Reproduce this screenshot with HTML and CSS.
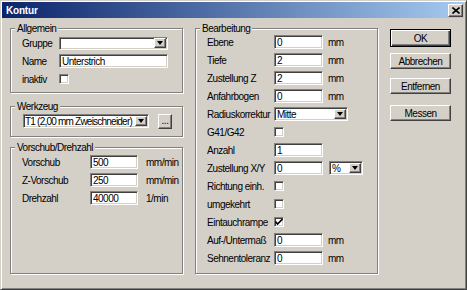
FILE: index.html
```html
<!DOCTYPE html>
<html lang="de">
<head>
  <meta charset="UTF-8">
  <title>Kontur</title>
  <link rel="stylesheet" href="styles.css">
</head>
<body>
  <div class="dialog">
    <div class="titlebar">
      <span class="title">Kontur</span>
      <span class="close">
        <svg width="8" height="7" viewBox="0 0 8 7"><path d="M0.5 0.5l7 6M7.5 0.5l-7 6" stroke="#000" stroke-width="1.6"/></svg>
      </span>
    </div>

    <div class="content">
      <div class="col-left">
        <fieldset class="group allgemein">
          <legend>Allgemein</legend>
          <div class="row">
            <span class="lbl">Gruppe</span>
            <div class="combo w-gruppe"><span class="combo-text"></span><span class="drop"></span></div>
          </div>
          <div class="row">
            <span class="lbl">Name</span>
            <input class="field w-name" type="text" value="Unterstrich">
          </div>
          <div class="row">
            <span class="lbl">inaktiv</span>
            <span class="check"></span>
          </div>
        </fieldset>

        <fieldset class="group werkzeug">
          <legend>Werkzeug</legend>
          <div class="row">
            <div class="combo w-tool"><span class="combo-text">T1 (2,00 mm Zweischneider)</span><span class="drop"></span></div>
            <button class="btn btn-dots">...</button>
          </div>
        </fieldset>

        <fieldset class="group vorschub">
          <legend>Vorschub/Drehzahl</legend>
          <div class="row">
            <span class="lbl">Vorschub</span>
            <input class="field w-num" type="text" value="500">
            <span class="unit">mm/min</span>
          </div>
          <div class="row">
            <span class="lbl">Z-Vorschub</span>
            <input class="field w-num" type="text" value="250">
            <span class="unit">mm/min</span>
          </div>
          <div class="row">
            <span class="lbl">Drehzahl</span>
            <input class="field w-num" type="text" value="40000">
            <span class="unit">1/min</span>
          </div>
        </fieldset>
      </div>

      <fieldset class="group bearbeitung">
        <legend>Bearbeitung</legend>
        <div class="rows">
          <div class="row"><span class="lbl">Ebene</span><input class="field w-val" type="text" value="0"><span class="unit">mm</span></div>
          <div class="row"><span class="lbl">Tiefe</span><input class="field w-val" type="text" value="2"><span class="unit">mm</span></div>
          <div class="row"><span class="lbl">Zustellung Z</span><input class="field w-val" type="text" value="2"><span class="unit">mm</span></div>
          <div class="row"><span class="lbl">Anfahrbogen</span><input class="field w-val" type="text" value="0"><span class="unit">mm</span></div>
          <div class="row">
            <span class="lbl">Radiuskorrektur</span>
            <div class="combo w-radius"><span class="combo-text">Mitte</span><span class="drop"></span></div>
          </div>
          <div class="row"><span class="lbl">G41/G42</span><span class="check"></span></div>
          <div class="row"><span class="lbl">Anzahl</span><input class="field w-val" type="text" value="1"></div>
          <div class="row">
            <span class="lbl">Zustellung X/Y</span>
            <input class="field w-val" type="text" value="0">
            <div class="combo w-pct"><span class="combo-text">%</span><span class="drop"></span></div>
          </div>
          <div class="row"><span class="lbl">Richtung einh.</span><span class="check"></span></div>
          <div class="row"><span class="lbl">umgekehrt</span><span class="check"></span></div>
          <div class="row">
            <span class="lbl">Eintauchrampe</span>
            <span class="check">
              <svg width="8" height="8" viewBox="0 0 8 8"><path d="M0.5 3.5l2 2.5 5-5" fill="none" stroke="#000" stroke-width="1.6"/></svg>
            </span>
          </div>
          <div class="row"><span class="lbl">Auf-/Untermaß</span><input class="field w-val" type="text" value="0"><span class="unit">mm</span></div>
          <div class="row"><span class="lbl">Sehnentoleranz</span><input class="field w-val" type="text" value="0"><span class="unit">mm</span></div>
        </div>
      </fieldset>

      <div class="buttons">
        <button class="btn btn-default">OK</button>
        <button class="btn btn-cancel">Abbrechen</button>
        <button class="btn btn-remove">Entfernen</button>
        <button class="btn btn-measure">Messen</button>
      </div>
    </div>
  </div>
</body>
</html>
```

FILE: styles.css
```css
* {
  box-sizing: border-box;
}
body {
  margin: 0;
  font-family: "Liberation Sans", Arial, sans-serif;
  font-size: 10px;
  letter-spacing: -0.5px;
  color: #000;
}
.dialog {
  width: 467px;
  height: 290px;
  background: #d4d0c8;
  border: 1px solid;
  border-color: #d4d0c8 #404040 #404040 #d4d0c8;
  box-shadow: inset 1px 1px #fff, inset -1px -1px #808080;
  padding: 1px 2px 2px 1px;
  display: flex;
  flex-direction: column;
}

/* title bar */
.titlebar {
  height: 16px;
  flex: none;
  display: flex;
  align-items: center;
  justify-content: space-between;
  padding: 0 1px 0 4px;
  background: linear-gradient(to right, #0a246a, #a6caf0);
}
.title {
  color: #fff;
  font-weight: bold;
  letter-spacing: -0.2px;
}
.close {
  width: 15px;
  height: 13px;
  display: flex;
  align-items: center;
  justify-content: center;
  background: #d4d0c8;
  border: 1px solid;
  border-color: #fff #404040 #404040 #fff;
  box-shadow: inset -1px -1px #808080;
}

/* main area */
.content {
  flex: 1;
  display: flex;
  gap: 12px;
  padding: 5px 0 13px 8px;
}
.col-left {
  width: 173px;
  display: flex;
  flex-direction: column;
}

/* group boxes */
.group {
  margin: 0;
  padding: 0 10px 0 11px;
  min-width: 0;
  border: 1px solid #808080;
  box-shadow: inset 1px 1px #fff, 1px 1px #fff;
}
.group legend {
  margin-left: -7px;
  padding: 0 2px;
  line-height: 11px;
  background: #d4d0c8;
}
.allgemein {
  padding-bottom: 4px;
}
.werkzeug {
  margin-top: 8px;
  padding-bottom: 6px;
}
.vorschub {
  margin-top: 5px;
  flex: 1;
}
.bearbeitung {
  width: 183px;
  flex: none;
}
.bearbeitung .rows {
  margin-top: -1px;
}

.row {
  height: 18px;
  display: flex;
  align-items: center;
}
.lbl {
  flex: none;
}
.allgemein .lbl {
  width: 37px;
}
.vorschub .lbl {
  width: 68px;
}
.bearbeitung .lbl {
  width: 67px;
}
.unit {
  margin-left: 8px;
}
.bearbeitung .unit {
  margin-left: 5px;
}

/* sunken controls */
.field,
.combo,
.check {
  flex: none;
  background: #fff;
  border: 1px solid;
  border-color: #808080 #fff #fff #808080;
  box-shadow: inset 1px 1px #404040, inset -1px -1px #d4d0c8;
}
.field {
  height: 14px;
  padding: 0 2px;
  font: inherit;
  letter-spacing: inherit;
  color: #000;
  outline: none;
}
.w-name {
  width: 109px;
}
.w-num {
  width: 48px;
}
.w-val {
  width: 49px;
}

.combo {
  height: 14px;
  display: flex;
  align-items: center;
  overflow: hidden;
}
.combo-text {
  flex: 1;
  min-width: 0;
  padding-left: 2px;
  white-space: nowrap;
}
.drop {
  flex: none;
  width: 12px;
  height: 10px;
  margin: 1px;
  display: flex;
  align-items: center;
  justify-content: center;
  background: #d4d0c8;
  border: 1px solid;
  border-color: #fff #404040 #404040 #fff;
  box-shadow: inset -1px -1px #808080;
}
.drop::after {
  content: "";
  border-style: solid;
  border-width: 4px 3.5px 0;
  border-color: #000 transparent transparent;
}
.w-gruppe {
  width: 109px;
  height: 13px;
}
.w-tool {
  width: 126px;
  margin-left: 1px;
}
.w-tool .combo-text {
  padding-left: 1px;
  letter-spacing: -0.78px;
}
.w-radius {
  width: 74px;
}
.w-pct {
  width: 34px;
  margin-left: 6px;
}

.check {
  width: 10px;
  height: 10px;
  display: flex;
  align-items: center;
  justify-content: center;
}

/* raised buttons */
.btn {
  margin: 0;
  padding: 0;
  font: inherit;
  letter-spacing: inherit;
  color: #000;
  background: #d4d0c8;
  border: 1px solid;
  border-color: #fff #404040 #404040 #fff;
  box-shadow: inset -1px -1px #808080;
}
.btn-dots {
  width: 18px;
  height: 15px;
  margin-left: 9px;
  line-height: 8px;
}
.buttons {
  width: 61px;
  flex: none;
  display: flex;
  flex-direction: column;
  padding-top: 6px;
}
.buttons .btn {
  height: 16px;
}
.buttons .btn-default {
  height: 18px;
  border: 1px solid #000;
  box-shadow: inset 1px 1px #fff, inset -1px -1px #404040, inset -2px -2px #808080;
}
.btn-cancel {
  margin-top: 6px;
}
.btn-remove {
  margin-top: 9px;
}
.btn-measure {
  margin-top: 11px;
}
```
